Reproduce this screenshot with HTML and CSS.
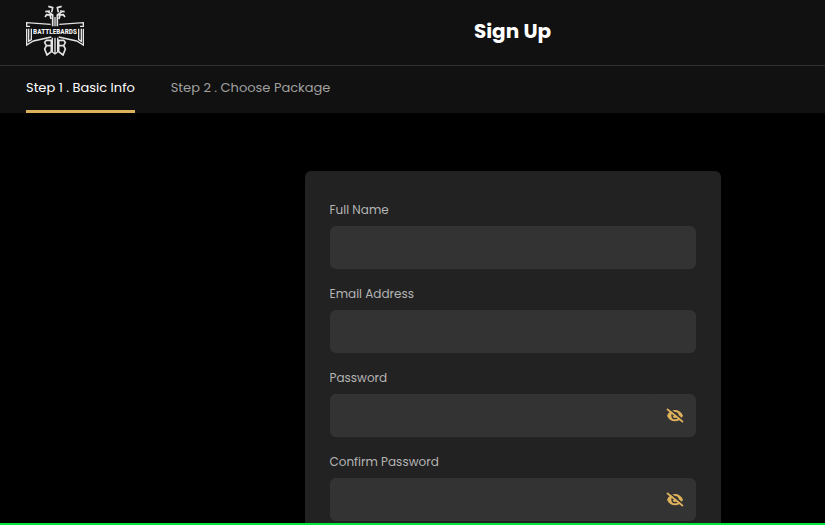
FILE: index.html
```html
<!DOCTYPE html>
<html lang="en">
  <head>
    <meta charset="utf-8">
    <meta name="viewport" content="width=device-width, initial-scale=1">
    <title>Sign Up</title>
    <link rel="stylesheet" href="styles.css">
  </head>
  <body>
    <svg class="symbols">
      <symbol id="eye-off" viewBox="0 0 54 45">
        <path d="M3 23C8 12 17 6 27 6s19 6 24 17c-5 11-14 17-24 17S8 34 3 23z" fill="currentColor"/>
        <circle cx="27" cy="23" r="11" fill="#333"/>
        <path d="M27 16a7 7 0 1 1-7 8l7-1z" fill="currentColor"/>
        <path d="M7 0l47 38" stroke="#333" stroke-width="5"/>
        <path d="M3 3l48 39" stroke="currentColor" stroke-width="5"/>
      </symbol>
    </svg>

    <header class="header">
      <a class="logo" href="#" aria-label="Battlebards">
        <svg viewBox="0 0 174 153" width="58" height="51">
          <g fill="none" stroke="#e4e4e4" stroke-width="4">
            <!-- pegs -->
            <path d="M80 64V30L66 20M94 64V30l14-10M80 30l-18-1-5 7M94 30l18-1 5 7M72 18l-14 2M102 18l14 2M77 22l3-14-13-4M97 22l-3-14 13-4M72 30l3 12M102 30l-3 12" stroke-width="5"/>
            <path d="M87 64V36"/>
            <!-- body -->
            <path d="M79 98v43l8 6 8-6V98M87 98v46"/>
            <path d="M76 106H61l-5 6 5 10-5 10 7 18 13-10zM98 106h15l5 6-5 10 5 10-7 18-13-10zM61 122h15M98 122h15" stroke-width="5"/>
            <!-- banner -->
            <path d="M74 58L2 53v11h10M2 71v49l20-12 54-12M100 58l72-5v11h-10M172 71v49l-20-12-54-12M8 71v38l8-5V71M166 71v38l-8-5V71"/>
          </g>
          <text x="87" y="88" text-anchor="middle">BATTLEBARDS</text>
        </svg>
      </a>
      <h1 class="title">Sign Up</h1>
    </header>

    <nav class="steps">
      <a class="step active" href="#basic">Step 1 . Basic Info</a>
      <a class="step" href="#package">Step 2 . Choose Package</a>
    </nav>

    <main class="content">
      <form class="card" id="basic">
        <div class="field">
          <label for="name">Full Name</label>
          <input type="text" id="name">
        </div>
        <div class="field">
          <label for="email">Email Address</label>
          <input type="email" id="email">
        </div>
        <div class="field">
          <label for="password">Password</label>
          <div class="secret">
            <input type="password" id="password">
            <button type="button" aria-label="Show password"><svg width="18" height="15"><use href="#eye-off"/></svg></button>
          </div>
        </div>
        <div class="field">
          <label for="confirm">Confirm Password</label>
          <div class="secret">
            <input type="password" id="confirm">
            <button type="button" aria-label="Show password"><svg width="18" height="15"><use href="#eye-off"/></svg></button>
          </div>
        </div>
      </form>
    </main>
    <div class="bottom-line"></div>
  </body>
</html>
```

FILE: styles.css
```css
* { box-sizing: border-box; }

body {
  --offset: 200px;
  display: flex;
  flex-direction: column;
  height: 100vh;
  margin: 0;
  background: #000;
  color: #fff;
  font: 13px/20px Poppins, Inter, sans-serif;
}

.symbols { display: none; }

.header {
  display: grid;
  grid-template-columns: var(--offset) 1fr;
  flex: none;
  align-items: center;
  height: 66px;
  padding-bottom: 4px;
  background: #111;
  border-bottom: 1px solid #303030;
}
.logo { margin-left: 26px; line-height: 0; }
.logo text { fill: #f4f4f4; font: bold 22px "Roboto Condensed", Roboto, sans-serif; }
.title { margin: 0; font-size: 20px; line-height: 32px; font-weight: 700; text-align: center; }

.steps {
  display: flex;
  flex: none;
  gap: 36px;
  height: 47px;
  padding: 0 26px;
  background: #111;
}
.step {
  padding-top: 12px;
  color: #a0a0a0;
  border-bottom: 3px solid transparent;
  text-decoration: none;
}
.step.active { color: #fff; border-color: #deb25c; }

.content {
  flex: 1;
  min-height: 0;
  padding: 58px 0 0 var(--offset);
  overflow-y: auto;
  scrollbar-width: none;
}
.card {
  max-width: 416px;
  margin: 0 auto;
  padding: 29px 25px;
  background: #222;
  border-radius: 6px;
}
.field { margin-bottom: 15px; }
.field label {
  display: block;
  margin-bottom: 6px;
  color: #b4b4b4;
  font-size: 12px;
}
.field input {
  display: block;
  width: 100%;
  height: 43px;
  padding: 0 12px;
  background: #333;
  border: 0;
  border-radius: 6px;
  color: #fff;
  font: inherit;
}
.field input:focus { outline: 1px solid #deb25c; }

.secret { display: flex; align-items: center; background: #333; border-radius: 6px; }
.secret button {
  padding: 0 12px;
  background: none;
  border: 0;
  color: #deb25c;
  line-height: 0;
  cursor: pointer;
}

.bottom-line { flex: none; height: 2px; background: #00e63a; }
```
